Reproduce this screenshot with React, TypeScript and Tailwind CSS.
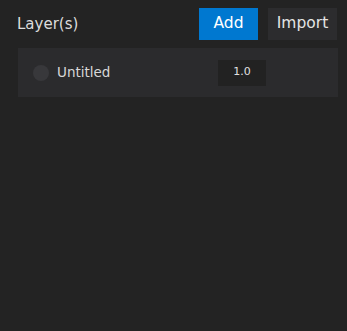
export default function App() {
  return (
    <div className="w-[347px] h-[331px] bg-[#232323] text-[#dcdcdc] font-['DejaVu_Sans',sans-serif]">
      <div className="flex items-center h-[48px] pl-[17px] pr-[10px]">
        <div className="flex-1 text-[15px] leading-none">Layer(s)</div>
        <div className="flex gap-[10px]">
          <button className="w-[59px] h-[32px] bg-[#0078d0] text-white text-[15.5px]">Add</button>
          <button className="w-[69px] h-[32px] bg-[#2c2c2e] text-[#e4e4e4] text-[15.5px]">Import</button>
        </div>
      </div>
      <div className="ml-[18px] mr-[9px] h-[49px] bg-[#2b2b2d] flex items-center pl-[15px]">
        <div className="w-[16px] h-[16px] rounded-full bg-[#38383b]" />
        <div className="ml-[8px] text-[13.5px] text-[#d8d8d8] w-[161px]">Untitled</div>
        <div className="w-[48px] h-[26px] bg-[#222222] flex items-center justify-center text-[11px] text-[#e0e0e0]">1.0</div>
      </div>
    </div>
  );
}
